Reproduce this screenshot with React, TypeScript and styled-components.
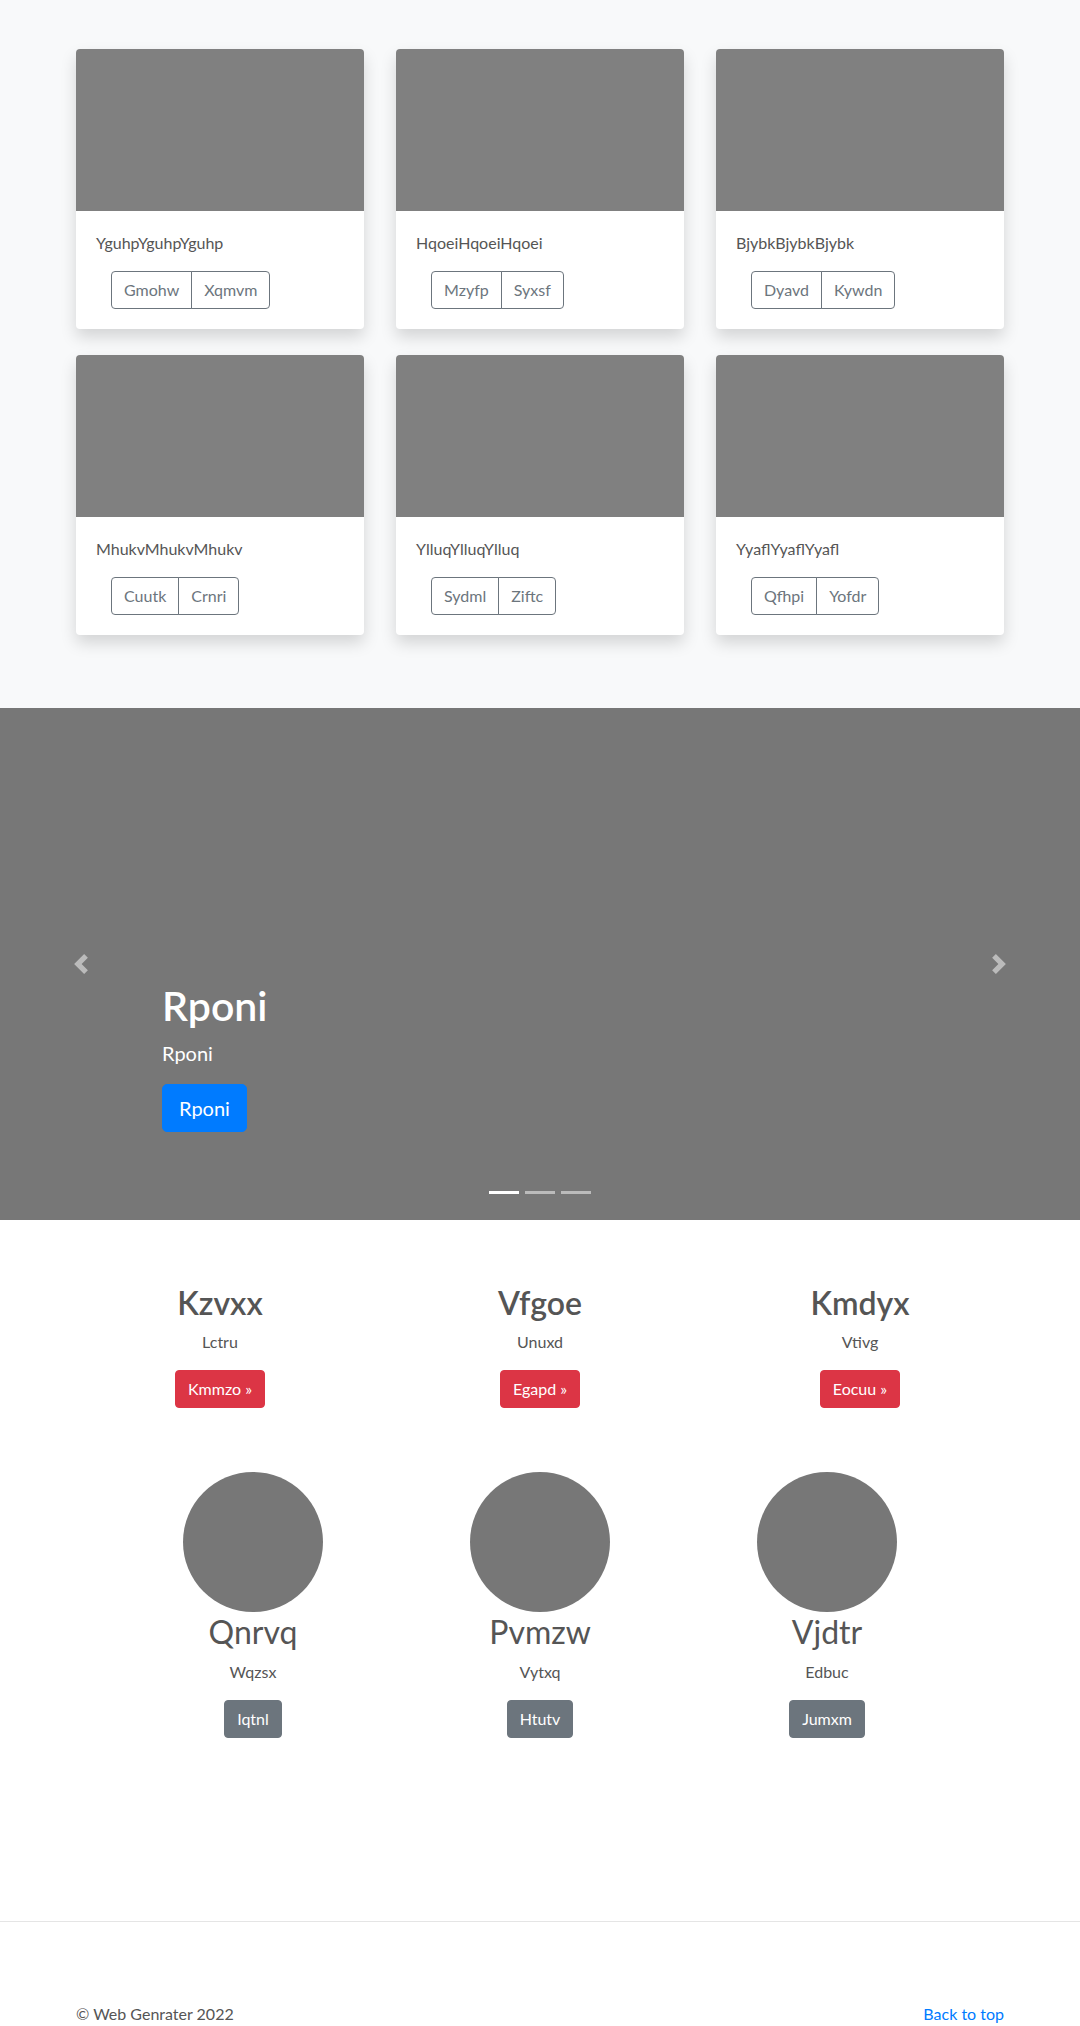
import React from "react";
import styled, { createGlobalStyle } from "styled-components";

const GlobalStyle = createGlobalStyle`
  html, body { margin: 0; padding: 0; }
  body {
    font-family: Lato, "Open Sans", "Liberation Sans", sans-serif;
    font-size: 16px;
    line-height: 1.5;
    color: #555;
    background: #fff;
  }
  * { box-sizing: border-box; }
`;

const Album = styled.section`
  background: #f8f9fa;
  padding: 49px 0 47px;
`;

const Container = styled.div`
  width: 960px;
  margin: 0 auto;
  padding: 0 16px;
`;

const CardGrid = styled.div`
  display: grid;
  grid-template-columns: repeat(3, 288px);
  column-gap: 32px;
  row-gap: 26px;
  padding-bottom: 26px;
`;

const Card = styled.div`
  background: #fff;
  border-radius: 4px;
  overflow: hidden;
  box-shadow: 0 8px 16px rgba(0, 0, 0, 0.15);
  display: flex;
  flex-direction: column;
`;

const CardImage = styled.div`
  height: 162px;
  background: #808080;
`;

const CardBody = styled.div`
  padding: 20px;
`;

const CardText = styled.p`
  margin: 0 0 16px;
  font-size: 16px;
  line-height: 24px;
  color: #555;
`;

const BtnGroup = styled.div`
  display: inline-flex;
  margin-left: 15px;
`;

const OutlineBtn = styled.button`
  font-family: inherit;
  font-size: 16px;
  line-height: 24px;
  padding: 6px 12px;
  color: #6c757d;
  background: transparent;
  border: 1px solid #6c757d;
  border-radius: 0;
  &:first-child { border-radius: 4px 0 0 4px; }
  &:last-child { border-radius: 0 4px 4px 0; margin-left: -1px; }
`;

const Carousel = styled.div`
  position: relative;
  height: 512px;
  background: #777;
  margin-bottom: 64px;
`;

const Control = styled.div<{ $side: "left" | "right" }>`
  position: absolute;
  top: 0;
  bottom: 0;
  ${(p) => (p.$side === "left" ? "left: 0;" : "right: 0;")}
  width: 15%;
  display: flex;
  align-items: center;
  justify-content: center;
  opacity: 0.5;
`;

const Caption = styled.div`
  position: absolute;
  left: 15%;
  right: 15%;
  bottom: 48px;
  padding: 20px 0;
  color: #fff;
  text-align: left;
`;

const CaptionTitle = styled.h1`
  margin: 0 0 8px;
  font-size: 41px;
  font-weight: 600;
  line-height: 1.2;
`;

const Lead = styled.p`
  margin: 0 0 16px;
  font-size: 20px;
  line-height: 30px;
`;

const BtnRow = styled.div<{ $center?: boolean; $gap?: number }>`
  display: flex;
  justify-content: ${(p) => (p.$center ? "center" : "flex-start")};
  margin-bottom: ${(p) => p.$gap ?? 16}px;
`;

const Btn = styled.a<{ $variant: "primary" | "danger" | "secondary"; $lg?: boolean }>`
  display: inline-block;
  font-size: ${(p) => (p.$lg ? "20px" : "16px")};
  line-height: 1.5;
  padding: ${(p) => (p.$lg ? "8px 16px" : "6px 12px")};
  border-radius: ${(p) => (p.$lg ? "5px" : "4px")};
  border: 1px solid
    ${(p) => (p.$variant === "primary" ? "#007bff" : p.$variant === "danger" ? "#dc3545" : "#6c757d")};
  background: ${(p) => (p.$variant === "primary" ? "#007bff" : p.$variant === "danger" ? "#dc3545" : "#6c757d")};
  color: #fff;
  text-decoration: none;
`;

const Indicators = styled.ol`
  position: absolute;
  left: 15%;
  right: 15%;
  bottom: 0;
  margin: 0 0 16px;
  padding: 0;
  list-style: none;
  display: flex;
  justify-content: center;
`;

const Indicator = styled.li<{ $active?: boolean }>`
  box-sizing: content-box;
  width: 30px;
  height: 3px;
  margin: 0 3px;
  background: #fff;
  background-clip: padding-box;
  border-top: 10px solid transparent;
  border-bottom: 10px solid transparent;
  opacity: ${(p) => (p.$active ? 1 : 0.5)};
`;

const FeatureGrid = styled.div`
  display: grid;
  grid-template-columns: repeat(3, 288px);
  column-gap: 32px;
`;

const CircleGrid = styled.div`
  display: grid;
  grid-template-columns: repeat(3, 287px);
  justify-content: center;
  margin-top: 24px;
`;

const Col = styled.div`
  text-align: center;
  margin-bottom: 24px;
`;

const Heading = styled.h2<{ $weight: number }>`
  margin: 0 0 8px;
  font-size: 32px;
  font-weight: ${(p) => p.$weight};
  line-height: 1.2;
  color: #555;
`;

const ColText = styled.p`
  margin: 0 12px 16px;
  line-height: 24px;
`;

const Circle = styled.div`
  width: 140px;
  height: 140px;
  border-radius: 50%;
  background: #777;
  margin: 0 auto 1px;
`;

const Footer = styled.footer`
  margin-top: 143px;
  border-top: 1px solid #e5e5e5;
  padding-top: 80px;
`;

const FooterRow = styled.div`
  display: flex;
  justify-content: space-between;
  line-height: 24px;
  color: #555;
`;

const FooterLink = styled.a`
  color: #007bff;
  text-decoration: none;
`;

const ChevronLeft = () => (
  <svg width="20" height="20" viewBox="0 0 8 8" fill="#fff">
    <path d="M5.25 0l-4 4 4 4 1.5-1.5L4.25 4l2.5-2.5L5.25 0z" />
  </svg>
);

const ChevronRight = () => (
  <svg width="20" height="20" viewBox="0 0 8 8" fill="#fff">
    <path d="M2.75 0l-1.5 1.5L3.75 4l-2.5 2.5L2.75 8l4-4-4-4z" />
  </svg>
);

const cards = [
  { text: "YguhpYguhpYguhp", a: "Gmohw", b: "Xqmvm" },
  { text: "HqoeiHqoeiHqoei", a: "Mzyfp", b: "Syxsf" },
  { text: "BjybkBjybkBjybk", a: "Dyavd", b: "Kywdn" },
  { text: "MhukvMhukvMhukv", a: "Cuutk", b: "Crnri" },
  { text: "YlluqYlluqYlluq", a: "Sydml", b: "Ziftc" },
  { text: "YyaflYyaflYyafl", a: "Qfhpi", b: "Yofdr" },
];

const features = [
  { title: "Kzvxx", text: "Lctru", btn: "Kmmzo »" },
  { title: "Vfgoe", text: "Unuxd", btn: "Egapd »" },
  { title: "Kmdyx", text: "Vtivg", btn: "Eocuu »" },
];

const people = [
  { title: "Qnrvq", text: "Wqzsx", btn: "Iqtnl" },
  { title: "Pvmzw", text: "Vytxq", btn: "Htutv" },
  { title: "Vjdtr", text: "Edbuc", btn: "Jumxm" },
];

export default function App() {
  return (
    <>
      <GlobalStyle />
      <Album>
        <Container>
          <CardGrid>
            {cards.map((c) => (
              <Card key={c.text}>
                <CardImage />
                <CardBody>
                  <CardText>{c.text}</CardText>
                  <BtnGroup>
                    <OutlineBtn>{c.a}</OutlineBtn>
                    <OutlineBtn>{c.b}</OutlineBtn>
                  </BtnGroup>
                </CardBody>
              </Card>
            ))}
          </CardGrid>
        </Container>
      </Album>

      <Carousel>
        <Control $side="left">
          <ChevronLeft />
        </Control>
        <Caption>
          <CaptionTitle>Rponi</CaptionTitle>
          <Lead>Rponi</Lead>
          <BtnRow $gap={20}>
            <Btn $variant="primary" $lg href="#">
              Rponi
            </Btn>
          </BtnRow>
        </Caption>
        <Control $side="right">
          <ChevronRight />
        </Control>
        <Indicators>
          <Indicator $active />
          <Indicator />
          <Indicator />
        </Indicators>
      </Carousel>

      <Container>
        <FeatureGrid>
          {features.map((f) => (
            <Col key={f.title}>
              <Heading $weight={600}>{f.title}</Heading>
              <ColText>{f.text}</ColText>
              <BtnRow $center>
                <Btn $variant="danger" href="#">
                  {f.btn}
                </Btn>
              </BtnRow>
            </Col>
          ))}
        </FeatureGrid>
      </Container>
      <CircleGrid>
        {people.map((p) => (
          <Col key={p.title}>
            <Circle />
            <Heading $weight={400}>{p.title}</Heading>
            <ColText>{p.text}</ColText>
            <BtnRow $center>
              <Btn $variant="secondary" href="#">
                {p.btn}
              </Btn>
            </BtnRow>
          </Col>
        ))}
      </CircleGrid>

      <Footer>
        <Container>
          <FooterRow>
            <span>© Web Genrater 2022</span>
            <FooterLink href="#">Back to top</FooterLink>
          </FooterRow>
        </Container>
      </Footer>
    </>
  );
}
